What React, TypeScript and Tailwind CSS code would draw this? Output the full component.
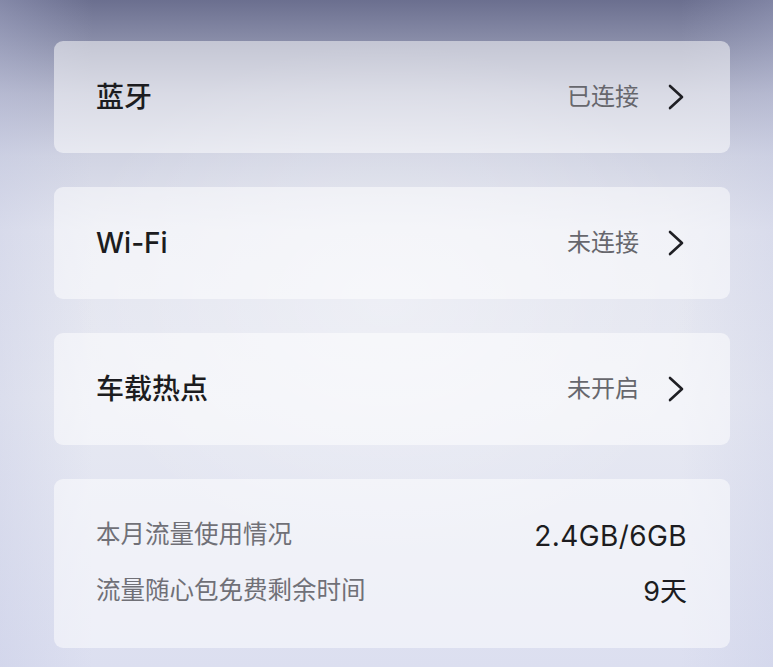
const font = "font-['Liberation_Sans','Noto_Sans_CJK_SC',sans-serif]"
const latin = "font-['Inter','Noto_Sans_CJK_SC',sans-serif]"

const rows = [
  { title: "蓝牙", status: "已连接" },
  { title: "Wi-Fi", status: "未连接" },
  { title: "车载热点", status: "未开启" },
]

function Chevron() {
  return (
    <svg width="16" height="26" viewBox="0 0 16 26" fill="none">
      <polyline
        points="2,2 14,13 2,24"
        stroke="#1f1f24"
        strokeWidth="2.6"
        strokeLinecap="round"
        strokeLinejoin="round"
      />
    </svg>
  )
}

export default function App() {
  return (
    <div
      className={`${font} relative h-[667px] w-full overflow-hidden bg-[radial-gradient(ellipse_60%_55%_at_50%_45%,rgba(255,255,255,0.35),rgba(255,255,255,0)_70%),linear-gradient(90deg,rgba(190,195,225,0.3)_0%,rgba(190,195,225,0)_12%,rgba(190,195,225,0)_88%,rgba(190,195,225,0.25)_100%),linear-gradient(180deg,#6b6f8f_0px,#8c90ab_45px,#b3b6cb_95px,#d1d4e3_155px,#e2e4ef_230px,#e7e9f2_400px,#dcdff0_667px)]`}
    >
      <div className="flex flex-col gap-[34px] pl-[54px] pr-[43px] pt-[41px]">
        {rows.map((row) => (
          <div
            key={row.title}
            className="flex h-[112px] items-center justify-between rounded-[9px] bg-white/50 pl-[42px] pr-[46px]"
          >
            <span className={`${latin} text-[28px] font-medium leading-none text-[#1c1c20]`}>
              {row.title}
            </span>
            <div className="flex items-center gap-[29px]">
              <span className="text-[24px] leading-none text-[#67676d]">{row.status}</span>
              <Chevron />
            </div>
          </div>
        ))}

        <div className="flex h-[169px] flex-col justify-center gap-[20px] rounded-[9px] bg-white/50 pl-[42px] pr-[43px]">
          <div className="flex h-[36px] items-center justify-between">
            <span className="text-[24.5px] leading-none text-[#707077]">本月流量使用情况</span>
            <span className={`${latin} text-[28px] leading-none tracking-[0.4px] text-[#1c1c20]`}>
              2.4GB/6GB
            </span>
          </div>
          <div className="flex h-[36px] items-center justify-between">
            <span className="text-[24.5px] leading-none text-[#707077]">流量随心包免费剩余时间</span>
            <span className={`${latin} text-[27px] leading-none text-[#1c1c20]`}>9天</span>
          </div>
        </div>
      </div>
    </div>
  )
}
